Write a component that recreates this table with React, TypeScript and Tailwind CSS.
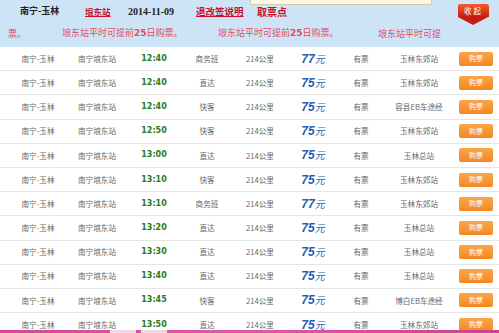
import React from "react";

const rows: [string, string, string, string][] = [
  ["12:40", "商务班", "77", "玉林东郊站"],
  ["12:40", "直达", "75", "玉林东郊站"],
  ["12:40", "快客", "75", "容县EB车途经"],
  ["12:50", "快客", "75", "玉林东郊站"],
  ["13:00", "直达", "75", "玉林总站"],
  ["13:10", "快客", "75", "玉林东郊站"],
  ["13:10", "商务班", "77", "玉林东郊站"],
  ["13:20", "直达", "75", "玉林总站"],
  ["13:30", "直达", "75", "玉林总站"],
  ["13:40", "直达", "75", "玉林总站"],
  ["13:45", "快客", "75", "博白EB车途经"],
  ["13:50", "直达", "75", "玉林东郊站"],
];

const cjk = "font-['Noto_Sans_CJK_SC',sans-serif]";

function Notice({ w }: { w: string }) {
  return (
    <span className={`${w} shrink-0 whitespace-nowrap`}>
      埌东站平时可提前<span className="font-bold font-['DejaVu_Sans',sans-serif] text-[9px]">25</span>日购票。
    </span>
  );
}

export default function App() {
  return (
    <div className={`w-[499px] h-[333px] overflow-hidden flex flex-col bg-white ${cjk}`}>
      {/* top band */}
      <div className="relative h-[47px] shrink-0 bg-[#cde4f6] flex flex-col">
        <div className="absolute left-[250px] top-0 w-[182px] h-[5px] bg-[#fdf8e4] border-b border-x border-[#d9cba6]" />
        <div className="h-[22px] flex items-center pl-[20px]">
          <div className="grid grid-cols-[65px_43px_68px_61px_auto] items-center">
            <span className="text-[9px] font-bold text-[#222]">南宁-玉林</span>
            <span className="text-[8.5px] font-bold text-[#c8102e] underline">埌东站</span>
            <span className="text-[10px] font-bold text-[#222] font-['Liberation_Serif',serif]">2014-11-09</span>
            <span className="text-[9.5px] font-bold text-[#c8102e] underline">退改签说明</span>
            <span className="text-[10px] font-bold text-[#c8102e]">取票点</span>
          </div>
          <div className="ml-auto mr-[10px] self-start mt-[4px] relative w-[31px] h-[13px] rounded-t-[2px] bg-gradient-to-b from-[#f25a2a] to-[#c81a12] flex items-center justify-center text-white text-[7.5px] tracking-[2px]">
            收起
            <div className="absolute left-0 top-[13px] w-0 h-0 border-l-[15.5px] border-r-[15.5px] border-t-[8px] border-l-transparent border-r-transparent border-t-[#c81a12]" />
          </div>
        </div>
        <div className="h-[23px] flex items-center text-[9px] text-[#e64b63] pl-[8px]">
          <span className="w-[54px] shrink-0">票。</span>
          <Notice w="w-[156px]" />
          <Notice w="w-[160px]" />
          <span className="shrink-0 whitespace-nowrap">埌东站平时可提</span>
        </div>
      </div>

      {/* table */}
      <div className="flex-1 overflow-hidden">
        {rows.map((r, i) => (
          <div
            key={i}
            className="h-[24.2px] grid grid-cols-[76px_42px_72px_34px_72px_34px_62px_54px_1fr] items-center border-b border-[#e6e6e6] text-[7.6px] leading-none text-[#666] text-center whitespace-nowrap"
          >
            <span>南宁-玉林</span>
            <span>南宁埌东站</span>
            <span className="font-['DejaVu_Sans',sans-serif] font-bold text-[8px] text-[#2a7a1e]">{r[0]}</span>
            <span>{r[1]}</span>
            <span>214公里</span>
            <span className="text-[#2b5cb0] italic leading-none">
              <span className="font-['Liberation_Sans',sans-serif] font-bold text-[12px]">{r[2]}</span>
              <span className="text-[10px]">元</span>
            </span>
            <span>有票</span>
            <span>{r[3]}</span>
            <div className="flex pl-[13px]">
              <div className="w-[34px] h-[14px] rounded-[2px] bg-gradient-to-b from-[#fba54a] to-[#f3861f] text-white text-[7px] flex items-center justify-center">
                购票
              </div>
            </div>
          </div>
        ))}
      </div>

      {/* bottom strip */}
      <div className="h-[3px] shrink-0 flex bg-gradient-to-r from-[#d6479f] via-[#e057b0] to-[#cf3f98]">
        <div className="w-[110px]" />
        <div className="w-[26px] bg-[#f0d8ea]" />
        <div className="w-[5px]" />
        <div className="w-[26px] bg-[#f0d8ea]" />
      </div>
    </div>
  );
}
